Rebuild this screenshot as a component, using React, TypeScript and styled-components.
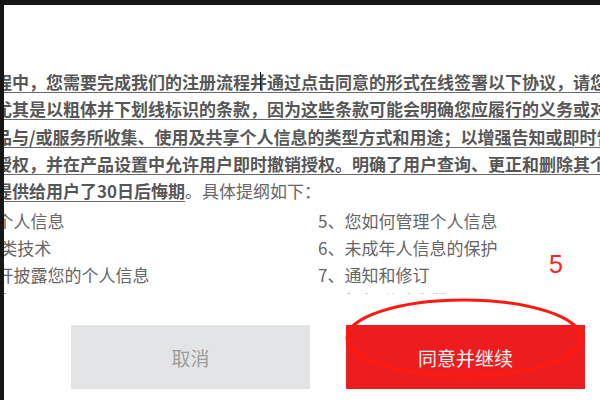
import React from "react";
import styled, { createGlobalStyle } from "styled-components";

const GlobalStyle = createGlobalStyle`
  html, body {
    margin: 0;
    padding: 0;
    background: #161616;
    overflow: hidden;
  }
  * { box-sizing: border-box; }
`;

const Frame = styled.div`
  width: 600px;
  height: 400px;
  padding: 5px 0 0 4px;
  background: #161616;
  display: flex;
`;

const Page = styled.div`
  flex: 1;
  position: relative;
  display: flex;
  flex-direction: column;
  background: #ffffff;
  overflow: hidden;
  font-family: "Noto Sans CJK SC", "Noto Sans", sans-serif;
`;

const Content = styled.div`
  height: 289px;
  flex-shrink: 0;
  overflow: hidden;
  padding-top: 63px;
`;

const Line = styled.div`
  white-space: nowrap;
  margin-left: -9px;
  font-size: 17px;
  line-height: 27.25px;
  color: #5a5a5a;
`;

const Strong = styled.span`
  font-weight: 700;
  color: #575757;
  text-decoration: underline;
  text-decoration-color: #6a6a6a;
  text-decoration-thickness: 1px;
  text-underline-offset: 3px;
`;

const Plain = styled.span`
  font-weight: 400;
  color: #666666;
`;

const Outline = styled.div`
  display: grid;
  grid-template-columns: 535px auto;
  margin-top: 4px;
  margin-left: -221px;
  font-size: 17px;
  line-height: 26.7px;
  color: #666666;
  white-space: nowrap;
`;

const Item = styled.div``;

const Footer = styled.div`
  flex: 1;
  display: flex;
  align-items: flex-start;
  gap: 36px;
  padding: 31px 0 0 67px;
  background: #ffffff;
`;

const Button = styled.button<{ $primary?: boolean }>`
  width: 239px;
  height: 64px;
  border: none;
  padding: 0;
  font-family: "Noto Sans CJK SC", "Noto Sans", sans-serif;
  font-size: 19px;
  background: ${(p) => (p.$primary ? "#ec1c1f" : "#e3e4e6")};
  color: ${(p) => (p.$primary ? "#fff5f5" : "#9d9d9d")};
`;

const Caret = styled.div`
  position: absolute;
  left: 256px;
  top: 67px;
  width: 1px;
  height: 18px;
  background: #111;
`;

const Ring = styled.svg`
  position: absolute;
  left: 335px;
  top: 291px;
  width: 250px;
  height: 84px;
  overflow: visible;
  pointer-events: none;
`;

const StepLabel = styled.div`
  position: absolute;
  left: 545px;
  top: 247px;
  font-family: "Liberation Sans", Arial, sans-serif;
  font-size: 25px;
  line-height: 25px;
  color: #ff2323;
`;

const paragraph = [
  "程中，您需要完成我们的注册流程并通过点击同意的形式在线签署以下协议，请您务必",
  "尤其是以粗体并下划线标识的条款，因为这些条款可能会明确您应履行的义务或对您",
  "品与/或服务所收集、使用及共享个人信息的类型方式和用途；以增强告知或即时告知",
  "授权，并在产品设置中允许用户即时撤销授权。明确了用户查询、更正和删除其个人信息",
];

const outline = [
  ["1、我们如何收集和使用您的个人信息", "5、您如何管理个人信息"],
  ["2、我们如何使用Cookie和同类技术", "6、未成年人信息的保护"],
  ["3、我们如何共享、转让、公开披露您的个人信息", "7、通知和修订"],
  ["4、我们如何保护您的个人信息", "8、如何联系我们"],
];

export default function App() {
  return (
    <>
      <GlobalStyle />
      <Frame>
        <Page>
          <Content>
            {paragraph.map((t) => (
              <Line key={t}>
                <Strong>{t}</Strong>
              </Line>
            ))}
            <Line>
              <Strong>提供给用户了30日后悔期</Strong>
              <Plain>。具体提纲如下：</Plain>
            </Line>
            <Outline>
              {outline.map(([a, b]) => (
                <React.Fragment key={a}>
                  <Item>{a}</Item>
                  <Item>{b}</Item>
                </React.Fragment>
              ))}
            </Outline>
          </Content>
          <Footer>
            <Button>取消</Button>
            <Button $primary>同意并继续</Button>
          </Footer>
          <Caret />
          <StepLabel>5</StepLabel>
          <Ring viewBox="0 0 250 84">
            <ellipse cx="125" cy="42" rx="117" ry="38" fill="none" stroke="#ff1a0f" strokeWidth="3" />
          </Ring>
        </Page>
      </Frame>
    </>
  );
}
